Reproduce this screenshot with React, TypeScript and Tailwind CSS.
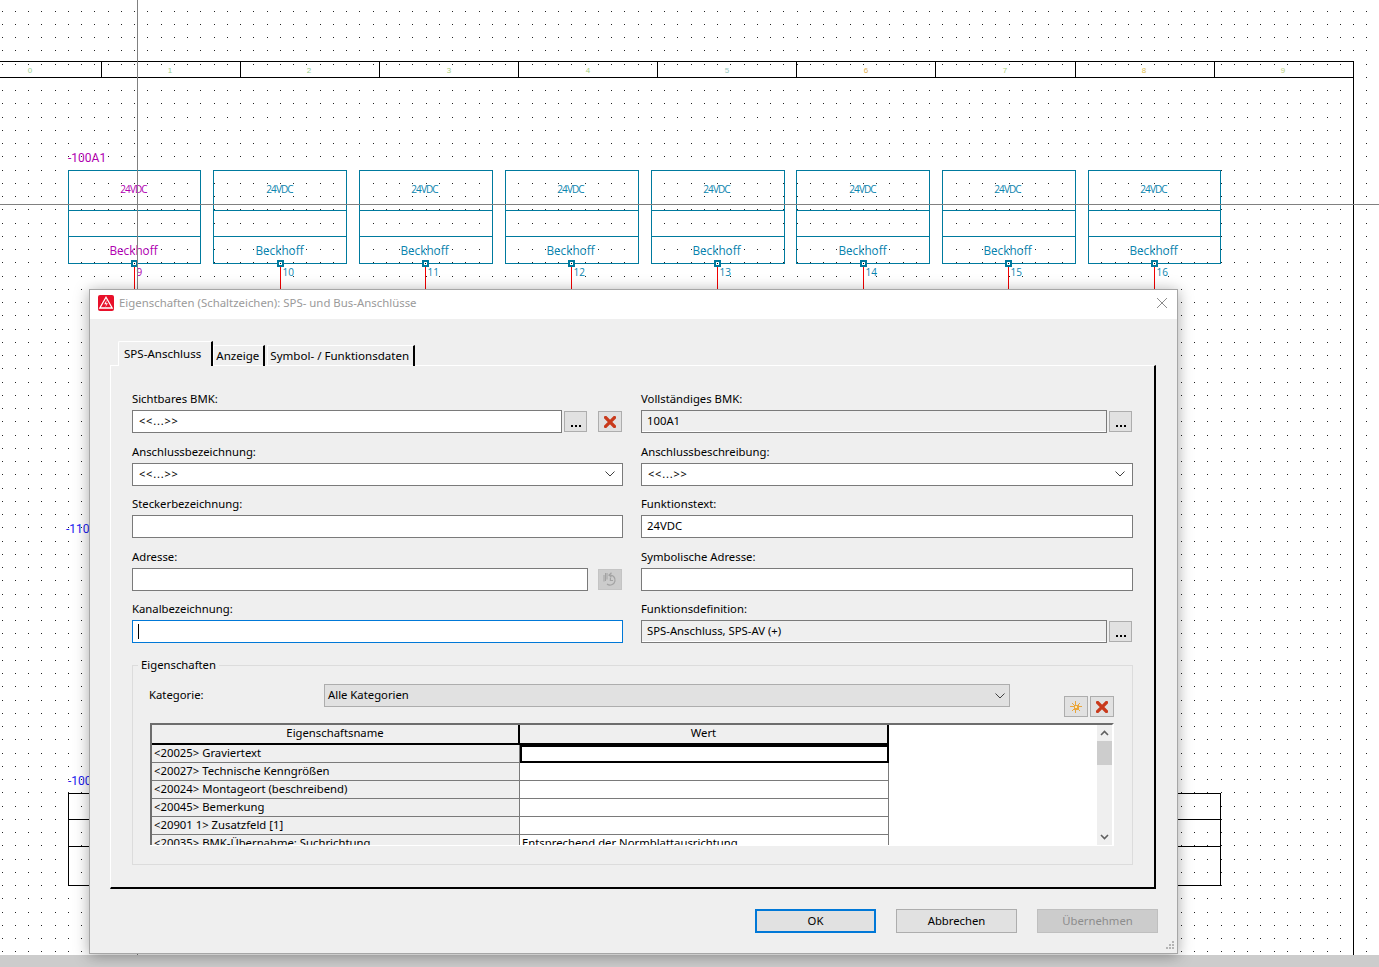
import React from "react";

const BOXES = [
  { x1: 68.5, x2: 200.5, cx: 134, pin: "9" },
  { x1: 213.5, x2: 346.5, cx: 280, pin: "10" },
  { x1: 359.5, x2: 492.5, cx: 425, pin: "11" },
  { x1: 505.5, x2: 638.5, cx: 571, pin: "12" },
  { x1: 651.5, x2: 784.5, cx: 717, pin: "13" },
  { x1: 796.5, x2: 929.5, cx: 863, pin: "14" },
  { x1: 942.5, x2: 1075.5, cx: 1008, pin: "15" },
  { x1: 1088.5, x2: 1220.5, cx: 1154, pin: "16" },
];

const COLUMN_LINES = [101.5, 240.5, 379.5, 518.5, 657.5, 796.5, 935.5, 1075.5, 1214.5];

const COLUMN_LABELS = [
  { x: 30, fill: "#98d090" },
  { x: 170, fill: "#98d090" },
  { x: 309, fill: "#98d090" },
  { x: 449, fill: "#a8d080" },
  { x: 588, fill: "#a8d080" },
  { x: 727, fill: "#98c8c0" },
  { x: 866, fill: "#e0b050" },
  { x: 1005, fill: "#a8d080" },
  { x: 1144, fill: "#e0c050" },
  { x: 1283, fill: "#b8d080" },
];

// one path for the whole grid, rounding keeps each dot on a single pixel
function gridDots() {
  let d = "";
  for (let x = 1.7; x < 1379; x += 13.25) {
    for (let y = 10.5; y < 955; y += 13.25) {
      d += `M${Math.round(x)} ${Math.round(y)}h1v1h-1z`;
    }
  }
  return d;
}

function Schematic() {
  const teal = "#007a9e";
  return (
    <svg width="1379" height="955" className="block" shapeRendering="crispEdges">
      <path d={gridDots()} fill="#222" />

      {/* title strip */}
      <path d="M0 61.5H1353.5M0 77.5H1353.5M1353.5 61V955" stroke="#000" fill="none" />
      {COLUMN_LINES.map((x) => (
        <path key={x} d={`M${x} 61V77`} stroke="#000" />
      ))}
      {COLUMN_LABELS.map((c, i) => (
        <text key={c.x} x={c.x} y={73} fontSize="8" textAnchor="middle" fill={c.fill} fontFamily="'Liberation Sans', sans-serif">
          {i}
        </text>
      ))}

      <text x={68} y={162} fontSize="12" fill="#b000b0" fontFamily="Roboto, sans-serif">
        -100A1
      </text>
      <text x={66} y={533} fontSize="12" fill="#2020f0" fontFamily="Roboto, sans-serif">
        -110
      </text>
      <text x={68} y={785} fontSize="12" fill="#2020f0" fontFamily="Roboto, sans-serif">
        -100
      </text>

      {BOXES.map((b, i) => {
        const color = i === 0 ? "#b000b0" : "#0a84ae";
        return (
          <g key={b.x1}>
            <path d={`M${b.cx + 0.5} 266V290`} stroke="#f00000" />
            <rect x={b.x1} y={170.5} width={b.x2 - b.x1} height={93} fill="none" stroke={teal} />
            <path d={`M${b.x1} 210.5H${b.x2}M${b.x1} 236.5H${b.x2}`} stroke={teal} />
            <rect x={b.cx - 2} y={261} width={5} height={5} fill="#fff" stroke={teal} strokeWidth="2" />
            <rect x={b.cx} y={263} width={1} height={1} fill="#000" />
            <text x={b.cx - 0.5} y={193} fontSize="10" textAnchor="middle" fill={color} letterSpacing="-0.9" fontFamily="'Open Sans', sans-serif">
              24VDC
            </text>
            <text x={b.cx - 0.5} y={255} fontSize="11.75" textAnchor="middle" fill={color} fontFamily="'Open Sans', sans-serif">
              Beckhoff
            </text>
            <text x={b.cx + 2.5} y={275.5} fontSize="10" fill={color} fontFamily="'Open Sans', sans-serif">
              {b.pin}
            </text>
          </g>
        );
      })}

      {/* lower block, mostly hidden by the dialog */}
      <path d="M68.5 793.5H1220.5V885.5H68.5ZM68.5 819.5H1220.5M68.5 846.5H1220.5" fill="none" stroke="#000" />

      {/* crosshair */}
      <path d="M137.5 0V955M0 204.5H1379" stroke="#808080" />
    </svg>
  );
}

function WarningIcon() {
  return (
    <svg width="16" height="16" viewBox="0 0 16 16">
      <rect width="16" height="16" rx="2" fill="#e8102a" />
      <path d="M8 2.2 14.2 13H1.8Z" fill="none" stroke="#fff" strokeWidth="1.3" />
      <path d="M8.8 4.8 6.2 9.2H8.4L7.2 12.2 10 8.2H8Z" fill="#fff" />
    </svg>
  );
}

function RedX({ size = 12 }: { size?: number }) {
  return (
    <svg width={size} height={size} viewBox="0 0 12 12">
      <path d="M1.5 1.5 10.5 10.5M10.5 1.5 1.5 10.5" stroke="#c93a1c" strokeWidth="3.2" strokeLinecap="square" fill="none" />
    </svg>
  );
}

function SunIcon() {
  return (
    <svg width="12" height="12" viewBox="0 0 12 12" shapeRendering="crispEdges">
      <path d="M5.5 0V12M0 5.5H12M2 2 4 4M10 2 8 4M2 10 4 8M10 10 8 8" stroke="#e9a63c" fill="none" />
      <rect x="3.5" y="3.5" width="5" height="5" fill="#e9a63c" />
      <rect x="5" y="5" width="1.5" height="1.5" fill="#fbe7bb" />
    </svg>
  );
}

function HistoryIcon() {
  return (
    <svg width="16" height="16" viewBox="0 0 16 16" fill="none" stroke="#a2a2a2" strokeWidth="1.2">
      <path d="M7 4.2A5 5 0 1 1 5 13" />
      <path d="M8.4 6.5V9.5H11" />
      <path d="M3.5 2V10M5 2V8.5M2 4V10.5" strokeWidth="1" />
      <path d="M9.5 1.8 7 4.2 9.5 6" />
    </svg>
  );
}

function Chevron({ className = "" }: { className?: string }) {
  return (
    <svg width="10" height="6" viewBox="0 0 10 6" className={className} fill="none" stroke="#404040">
      <path d="M0.5 0.5 5 5 9.5 0.5" />
    </svg>
  );
}

function DotsButton() {
  return (
    <button className="w-[23px] h-[21px] my-px shrink-0 border border-[#adadad] bg-[#e1e1e1] flex items-end justify-center pb-[4px] gap-[2px]">
      <span className="w-[2px] h-[2px] bg-black" />
      <span className="w-[2px] h-[2px] bg-black" />
      <span className="w-[2px] h-[2px] bg-black" />
    </button>
  );
}

function Field({ label, children }: { label: string; children: React.ReactNode }) {
  return (
    <div className="min-w-0">
      <div className="h-[18px] leading-[14px] text-black">{label}</div>
      {children}
    </div>
  );
}

function Input({ value = "", muted = false, className = "" }: { value?: string; muted?: boolean; className?: string }) {
  return (
    <div
      className={`h-[23px] flex-1 min-w-0 border border-[#7a7a7a] px-[5px] leading-[19px] ${
        muted ? "bg-[#efefef] shadow-[inset_0_-1px_0_#fff]" : "bg-white"
      } ${className}`}
    >
      {value}
    </div>
  );
}

function Combo({ value }: { value: string }) {
  return (
    <div className="h-[23px] border border-[#7a7a7a] bg-white pl-[6px] pr-[7px] flex items-center justify-between">
      <span className="text-[11px] tracking-[0.8px]">{value}</span>
      <Chevron />
    </div>
  );
}

function Tab({ label, active = false }: { label: string; active?: boolean }) {
  return (
    <div
      className={
        active
          ? "h-[25px] pl-[5px] pr-[10px] pt-[3px] text-[11.55px] border-t border-l border-white border-r-2 border-r-black rounded-tl-[2px] bg-[#efefef] relative z-10 -mb-px"
          : "h-[21px] mt-[4px] pl-[2px] pr-[4px] pt-[1px] text-[11.55px] border-t border-l border-white border-r-2 border-r-black"
      }
    >
      {label}
    </div>
  );
}

const ROWS = [
  { name: "<20025> Graviertext", value: "", selected: true },
  { name: "<20027> Technische Kenngrößen", value: "" },
  { name: "<20024> Montageort (beschreibend)", value: "" },
  { name: "<20045> Bemerkung", value: "" },
  { name: "<20901 1> Zusatzfeld [1]", value: "" },
  { name: "<20035> BMK-Übernahme: Suchrichtung", value: "Entsprechend der Normblattausrichtung" },
];

function PropertyTable() {
  return (
    <div className="mt-[6px] ml-px w-[964px] h-[123px] flex border-t-2 border-t-[#6d6d6d] border-b border-b-white border-r-2 border-r-white overflow-hidden bg-white">
      <div className="w-[739px] shrink-0 border-l-2 border-l-[#6d6d6d] overflow-hidden">
        <div className="flex h-[20px] bg-[#efefef] border-b-2 border-b-black text-center leading-[16px]">
          <div className="w-[368px] border-r-2 border-r-black">Eigenschaftsname</div>
          <div className="w-[369px] border-r-2 border-r-black">Wert</div>
        </div>
        {ROWS.map((row) => (
          <div key={row.name} className="flex items-start h-[18px] border-b border-b-[#7a7a7a] leading-[15px] whitespace-nowrap">
            <div className="w-[368px] h-[17px] pl-[2px] bg-[#efefef] border-r border-r-[#7a7a7a]">{row.name}</div>
            <div
              className={
                row.selected
                  ? "w-[369px] h-[18px] relative z-10 border-2 border-black"
                  : "w-[369px] h-[17px] pl-[2px] border-r border-r-[#7a7a7a]"
              }
            >
              {row.value}
            </div>
          </div>
        ))}
      </div>
      <div className="flex-1" />
      <div className="w-[15px] shrink-0 bg-[#efefef] flex flex-col items-center">
        <svg width="9" height="6" viewBox="0 0 9 6" className="mt-[5px]" fill="none" stroke="#606060" strokeWidth="1.6">
          <path d="M1 5 4.5 1.5 8 5" />
        </svg>
        <div className="w-[15px] h-[24px] mt-[5px] bg-[#cdcdcd]" />
        <svg width="9" height="6" viewBox="0 0 9 6" className="mt-[69px]" fill="none" stroke="#606060" strokeWidth="1.6">
          <path d="M1 1 4.5 4.5 8 1" />
        </svg>
      </div>
    </div>
  );
}

function Dialog() {
  return (
    <div className="absolute left-[89px] top-[289px] w-[1089px] h-[665px] border border-[#a6a6a6] bg-[#efefef] shadow-[0_2px_14px_rgba(0,0,0,0.35)] flex flex-col">
      {/* title bar */}
      <div className="h-[29px] shrink-0 bg-white flex items-center pl-[8px] pr-[9px] pb-[3px]">
        <WarningIcon />
        <span className="ml-[5px] text-[#9a9a9a] text-[11.4px]">Eigenschaften (Schaltzeichen): SPS- und Bus-Anschlüsse</span>
        <svg width="12" height="12" viewBox="0 0 12 12" className="ml-auto" stroke="#8c8c8c" fill="none">
          <path d="M1 1 11 11M11 1 1 11" />
        </svg>
      </div>

      {/* tabs */}
      <div className="mt-[22px] ml-[28px] flex items-start h-[24px] relative">
        <Tab label="SPS-Anschluss" active />
        <Tab label="Anzeige" />
        <div className="w-[2px]" />
        <Tab label="Symbol- / Funktionsdaten" />
      </div>

      {/* panel */}
      <div className="ml-[20px] w-[1046px] h-[524px] shrink-0 border-t border-l border-white border-r-2 border-r-black border-b-2 border-b-black pt-[26px] pl-[21px] pr-[21px]">
        <div className="grid grid-cols-[491px_492px] gap-x-[18px] gap-y-[11.5px]">
          <Field label="Sichtbares BMK:">
            <div className="flex">
              <Input value="<<...>>" className="text-[11px] tracking-[0.8px] pl-[6px]" />
              <div className="w-[2px]" />
              <DotsButton />
              <div className="w-[11px]" />
              <button className="w-[24px] h-[21px] my-px mr-px shrink-0 border border-[#adadad] bg-[#e1e1e1] flex items-center justify-center">
                <RedX />
              </button>
            </div>
          </Field>
          <Field label="Vollständiges BMK:">
            <div className="flex">
              <Input value="100A1" muted />
              <div className="w-[2px]" />
              <DotsButton />
              <div className="w-px" />
            </div>
          </Field>

          <Field label="Anschlussbezeichnung:">
            <Combo value="<<...>>" />
          </Field>
          <Field label="Anschlussbeschreibung:">
            <Combo value="<<...>>" />
          </Field>

          <Field label="Steckerbezeichnung:">
            <div className="flex">
              <Input />
            </div>
          </Field>
          <Field label="Funktionstext:">
            <div className="flex">
              <Input value="24VDC" />
            </div>
          </Field>

          <Field label="Adresse:">
            <div className="flex">
              <Input />
              <div className="w-[10px]" />
              <button className="w-[24px] h-[21px] my-px mr-px shrink-0 border border-[#c4c4c4] bg-[#cccccc] flex items-center justify-center">
                <HistoryIcon />
              </button>
            </div>
          </Field>
          <Field label="Symbolische Adresse:">
            <div className="flex">
              <Input />
            </div>
          </Field>

          <Field label="Kanalbezeichnung:">
            <div className="flex">
              <div className="h-[23px] flex-1 border border-[#0078d7] bg-white flex items-center pl-[5px]">
                <span className="w-px h-[15px] bg-black" />
              </div>
            </div>
          </Field>
          <Field label="Funktionsdefinition:">
            <div className="flex">
              <Input value="SPS-Anschluss, SPS-AV (+)" muted />
              <div className="w-[2px]" />
              <DotsButton />
              <div className="w-px" />
            </div>
          </Field>
        </div>

        {/* Eigenschaften group */}
        <div className="relative mt-[22px] w-[1001px] h-[200px] border border-[#dcdcdc] pt-[18px] pl-[16px]">
          <span className="absolute left-[5px] -top-[9px] bg-[#efefef] px-[3px] leading-[16px]">Eigenschaften</span>
          <div className="flex items-start">
            <div className="w-[175px] leading-[22px]">Kategorie:</div>
            <div className="w-[686px] h-[23px] border border-[#adadad] bg-[#e1e1e1] pl-[3px] pr-[4px] flex items-center justify-between">
              <span>Alle Kategorien</span>
              <Chevron />
            </div>
            <button className="ml-[54px] mt-[12px] w-[24px] h-[21px] border border-[#adadad] bg-[#e1e1e1] flex items-center justify-center">
              <SunIcon />
            </button>
            <button className="ml-[2px] mt-[12px] w-[24px] h-[21px] border border-[#adadad] bg-[#e1e1e1] flex items-center justify-center">
              <RedX />
            </button>
          </div>
          <PropertyTable />
        </div>
      </div>

      {/* footer buttons */}
      <div className="mt-[20px] ml-[665px] flex gap-[20px]">
        <button className="w-[121px] h-[24px] border-2 border-[#0078d7] bg-[#e1e1e1] leading-[18px]">OK</button>
        <button className="w-[121px] h-[24px] border border-[#adadad] bg-[#e1e1e1]">Abbrechen</button>
        <button className="w-[121px] h-[24px] border border-[#bfbfbf] bg-[#cccccc] text-[#8c8c8c]">Übernehmen</button>
      </div>

      {/* resize grip */}
      <svg width="10" height="10" viewBox="0 0 10 10" className="absolute right-[2px] bottom-[2px]" fill="#b4b4b4" shapeRendering="crispEdges">
        <path d="M7 0h2v2h-2zM4 3h2v2h-2zM7 3h2v2h-2zM1 6h2v2h-2zM4 6h2v2h-2zM7 6h2v2h-2z" />
      </svg>
    </div>
  );
}

export default function App() {
  return (
    <div className="relative w-[1379px] h-[967px] overflow-hidden bg-white font-['Noto_Sans',sans-serif] text-[11.3px] text-black flex flex-col">
      <Schematic />
      <div className="flex-1 bg-[#cccccc]" />
      <Dialog />
    </div>
  );
}
